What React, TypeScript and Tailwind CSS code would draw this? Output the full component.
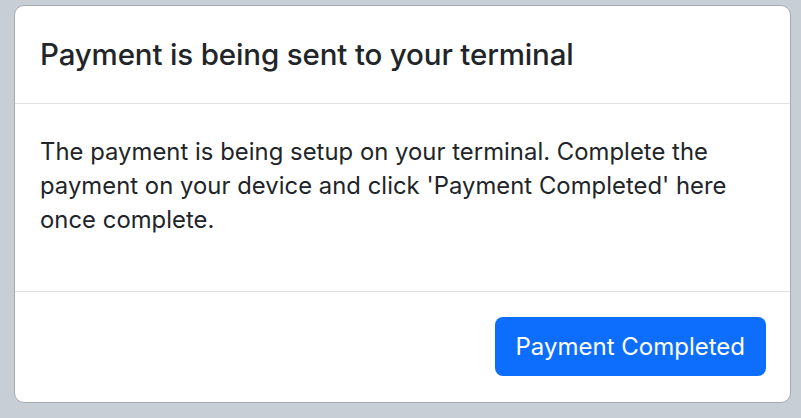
export default function App() {
  return (
    <div className="h-[418px] w-[801px] bg-[#c8ced6] pl-[14px] pr-[10px] pt-[5px] font-['Inter',sans-serif] text-[#212529]">
      <div className="flex h-[398px] flex-col overflow-hidden rounded-[10px] border border-[#a5aab1] bg-white">
        <div className="flex h-[98px] items-center border-b border-[#dee2e6] px-[25px]">
          <h5 className="pt-[1px] text-[29.5px] font-medium leading-[1.2] tracking-[-0.15px]">
            Payment is being sent to your terminal
          </h5>
        </div>

        <div className="flex-1 border-b border-[#dee2e6] px-[25px] pt-[31px]">
          <p className="text-[23.8px] leading-[34px] tracking-[0.05px]">
            The payment is being setup on your terminal. Complete the payment on your
            device and click 'Payment Completed' here once complete.
          </p>
        </div>

        <div className="flex h-[110px] items-center justify-end px-[24px]">
          <button className="mb-[1px] h-[59px] rounded-[8px] bg-[#0d6efd] px-[21px] text-[24px] text-white">
            Payment Completed
          </button>
        </div>
      </div>
    </div>
  );
}
